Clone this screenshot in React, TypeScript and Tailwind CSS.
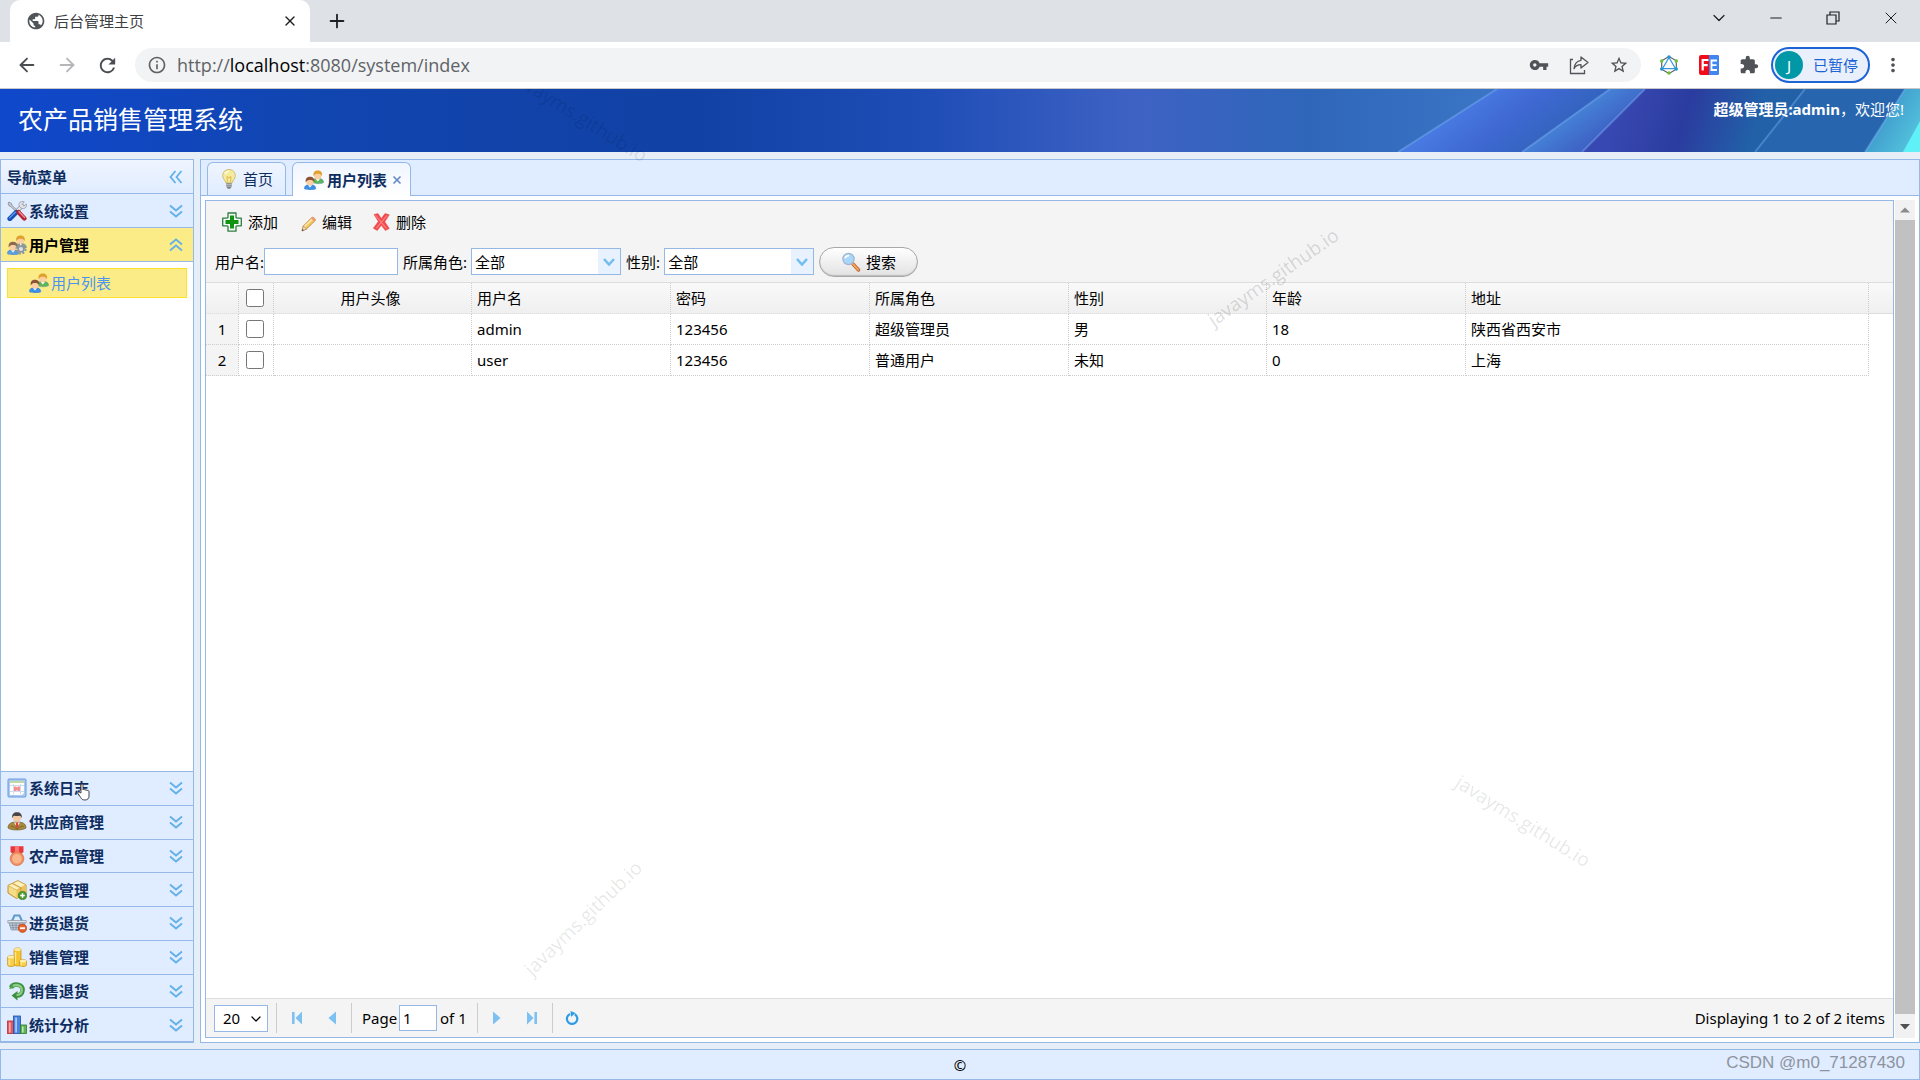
import { useState } from "react";
import type { ReactNode } from "react";
import {
  ArrowLeft,
  ArrowRight,
  ChevronDown,
  Minus,
  Plus,
  X,
} from "lucide-react";
import {
  MdExtension,
  MdMoreVert,
  MdOutlineInfo,
  MdPublic,
  MdRefresh,
  MdStarBorder,
  MdVpnKey,
} from "react-icons/md";

// --- Icons ---
const Icon = ({ children }: { children: ReactNode }) => (
  <svg viewBox="0 0 20 20" className="w-5 h-5 shrink-0" aria-hidden="true">
    {children}
  </svg>
);

const Person = ({ hair, body }: { hair: string; body: string }) => (
  <>
    <path
      d="M0.3 12.500C0.3 9.500 2.500 8.300 6 8.300s5.900 1.200 5.900 4.200c-1.800 1.600-9.800 1.600-11.600 0z"
      fill={body}
      stroke="#3d6fb0"
      strokeOpacity="0.5"
      strokeWidth="0.6"
    />
    <path d="M4 9l2 2.400L8 9z" fill="#fff" />
    <circle cx="6" cy="5.600" r="3.800" fill="#fbcfa4" />
    <path
      d="M1.800 6.200C1 2.200 3.200.5 6 .5s5 1.700 4.200 5.700C9.300 4.300 7.700 3.800 6 3.800s-3.300.5-4.200 2.400z"
      fill={hair}
    />
  </>
);

const UsersIcon = () => (
  <Icon>
    <g transform="translate(7.800 0)">
      <Person hair="#e0a02c" body="#5cb75a" />
    </g>
    <g transform="translate(0 6.200)">
      <Person hair="#8c5535" body="#3b8fe8" />
    </g>
  </Icon>
);

const UsersGearIcon = () => (
  <Icon>
    <g transform="translate(7.500 0)">
      <Person hair="#e0a02c" body="#8fae74" />
    </g>
    <g transform="translate(0 6.200)">
      <Person hair="#8c6a4f" body="#5c9fe0" />
    </g>
    <circle
      cx="14"
      cy="14"
      r="4.600"
      fill="none"
      stroke="#8d959e"
      strokeWidth="2"
      strokeDasharray="2 1.600"
    />
    <circle cx="14" cy="14" r="2.900" fill="#dde1e5" stroke="#8d959e" strokeWidth="1.600" />
  </Icon>
);

const ToolsIcon = () => (
  <Icon>
    <path d="M1 2l1-1 2.500 1.500.5 1.800 6.500 6.500-1.200 1.200L3.800 5.500 2.200 5z" fill="#c9ccd2" stroke="#777d88" strokeWidth="0.700" />
    <path d="M10.500 9.500l6-6" stroke="#8c929c" strokeWidth="4" />
    <path d="M10.500 9.500l5.500-5.500" stroke="#dfe2e7" strokeWidth="2.600" />
    <path d="M12 2.300c1.400-1.900 3.800-2.200 5.300-1.400l-2.200 2.300 1.800 1.800 2.400-2c.6 2-.3 4.200-2.600 4.600-2.600.4-5.400-2.600-4.700-5.300z" fill="#dfe2e7" stroke="#8c929c" strokeWidth="0.700" />
    <path d="M2.800 17.700l6.500-6.500" stroke="#174fb4" strokeWidth="4.800" strokeLinecap="round" />
    <path d="M2.600 16.900l5.700-5.700" stroke="#5f9bf0" strokeWidth="1.300" strokeLinecap="round" />
    <path d="M11.600 11.200l5.800 6.200" stroke="#b32330" strokeWidth="4.400" strokeLinecap="round" />
    <path d="M12 10.800l5.700 5.800" stroke="#f49aa0" strokeWidth="1.300" strokeLinecap="round" />
  </Icon>
);

const CalendarIcon = () => (
  <Icon>
    <rect x="1" y="1" width="18" height="18" rx="1" fill="#a9c8f2" stroke="#6a9ad8" />
    <path d="M3 3h14v12l-2 2H3z" fill="#fff" />
    <path d="M3 4h14" stroke="#a9cf86" strokeWidth="1.500" />
    <path d="M3 7.500h14M3 13.500h14M6.500 6v10.500M13.500 6v10.500" stroke="#cfdcee" />
    <path d="M7 8.500h2l1 1 1-1h2V13h-2l-1-1-1 1H7z" fill="#f58f92" />
  </Icon>
);

const SupplierIcon = () => (
  <Icon>
    <path d="M1 16c0-4.500 3.500-6 9-6s9 1.500 9 6c-3 2.600-15 2.600-18 0z" fill="#a98a3e" stroke="#6d5722" strokeWidth="0.700" />
    <path d="M7 10.500l3 4.500 3-4.500z" fill="#fff" />
    <path d="M8.500 10.500h3L11 12l.5 2.500-1.500 1.700L8.500 14.500 9 12z" fill="#d8473b" />
    <path d="M3.500 14.500c1.500-1 4 .5 6.500 2.500 2.500-2 5-3.500 6.500-2.500" stroke="#7e6427" fill="none" />
    <circle cx="10" cy="5.800" r="4" fill="#f2c9a2" />
    <path d="M5.300 6.500C4.500 2 7 .3 10 .3s5.500 1.700 4.700 6.200c-.4-2-1.200-2.800-2-2.800-1.800.4-3.600.4-5.400 0-.8 0-1.600.8-2 2.800z" fill="#4a4446" />
  </Icon>
);

const MedalIcon = () => (
  <Icon>
    <path d="M3.500.3h13V6l-3 2.500h-7L3.500 6z" fill="#e8383c" />
    <path d="M8 .3h4V8H8z" fill="#f8787a" />
    <circle cx="10" cy="12.700" r="6.900" fill="#f08e5e" stroke="#d8683c" strokeWidth="0.600" />
    <circle cx="10" cy="12.700" r="5.200" fill="#f9b48a" stroke="#e88659" strokeWidth="0.600" />
  </Icon>
);

const BoxAddIcon = () => (
  <Icon>
    <path d="M1 5.500L11 .7l8 4.300v8.500L9.500 18.500 1 13z" fill="#f6dc86" stroke="#c0912c" />
    <path d="M1 5.500l8.500 4.500L19 5 11 .7z" fill="#fdf0bb" stroke="#c99c3a" strokeWidth="0.600" />
    <path d="M9.500 10v8.500L19 13.500V5z" fill="#ebc25c" />
    <path d="M5.300 3.500l8.500 4.300v2.700" stroke="#cc9f3d" strokeWidth="1.200" fill="none" />
    <circle cx="15.500" cy="15.500" r="4.100" fill="#4c9a32" stroke="#2c6e1a" strokeWidth="0.600" />
    <path d="M15.500 13.200v4.600M13.200 15.500h4.600" stroke="#fff" strokeWidth="1.600" />
  </Icon>
);

const BasketIcon = () => (
  <Icon>
    <path d="M5 8l2.500-5.500h5L15 8" stroke="#5f9ac8" strokeWidth="2" fill="none" />
    <path d="M.8 7.500h18.400v2.300H.8z" fill="#e1e6ec" stroke="#8693a3" strokeWidth="0.700" />
    <path d="M2 10h16l-2 7H4.300z" fill="#c4ced9" stroke="#8391a2" strokeWidth="0.700" />
    <path d="M5.500 10l.8 7M9 10v7M12.500 10l-.4 7M2.500 12.300h15M3.300 14.700h13.500" stroke="#7f8da0" strokeWidth="0.800" />
    <circle cx="15.500" cy="15.200" r="4.200" fill="#e8622c" stroke="#b03d10" strokeWidth="0.600" />
    <path d="M13 15.200h5" stroke="#fff" strokeWidth="1.800" />
  </Icon>
);

const CoinsIcon = () => (
  <Icon>
    <path d="M7 2.800C7 .3 14 .3 14 2.800V17.500c0 2-7 2-7 0z" fill="#f6c52f" stroke="#c98e12" strokeWidth="0.700" />
    <ellipse cx="10.500" cy="2.600" rx="3.300" ry="1.500" fill="#fdec9a" />
    <path d="M.6 10.200c0-2 6.800-2 6.800 0V18c0 2-6.800 2-6.800 0z" fill="#f8cf48" stroke="#c98e12" strokeWidth="0.700" />
    <ellipse cx="4" cy="10.200" rx="3.100" ry="1.400" fill="#fdf0ac" />
    <path d="M12.500 14.200c0-2 7-2 7 0V18c0 2-7 2-7 0z" fill="#f8cf48" stroke="#c98e12" strokeWidth="0.700" />
    <ellipse cx="16" cy="14.200" rx="3.200" ry="1.400" fill="#fdf0ac" />
    <path d="M8.500 5v12M2.300 12.500V18M14.300 16v2.500" stroke="#fdeb9a" strokeWidth="1.300" />
  </Icon>
);

const ReturnIcon = () => (
  <Icon>
    <path d="M4 6.500C6.500 2 16 2.500 15.500 9.500c-.3 4-3.500 5-5.500 5" stroke="#3c8f3e" strokeWidth="4.600" fill="none" />
    <path d="M10.500 10v9.500L4.500 14.500z" fill="#3c8f3e" />
    <path d="M4.500 6.200C7 3 15 3 14.800 9.500c-.3 3.200-2.800 4.500-5.300 4.500" stroke="#8bcb86" strokeWidth="2.400" fill="none" />
    <path d="M2 8l5.500-1-3-4z" fill="#4f9f4f" />
  </Icon>
);

const ChartIcon = () => (
  <Icon>
    <rect x="0.500" y="6" width="6" height="12.500" fill="#e8565a" stroke="#b52d33" strokeWidth="0.800" />
    <rect x="2" y="7.500" width="1.600" height="10" fill="#f9b3b3" />
    <rect x="6.500" y="1" width="7" height="17.500" fill="#4b83e0" stroke="#2450a8" strokeWidth="0.800" />
    <rect x="8.200" y="2.500" width="1.800" height="15" fill="#a4c6fa" />
    <rect x="13.500" y="10" width="6" height="8.500" fill="#5fb458" stroke="#2c7c2c" strokeWidth="0.800" />
    <rect x="15" y="11.500" width="1.600" height="6" fill="#bce5b3" />
  </Icon>
);

const BulbIcon = () => (
  <Icon>
    <path d="M10 .5c-3.900 0-6.300 2.800-6.300 6.100 0 3.300 2.800 4.700 3.200 7.400h6.200c.4-2.700 3.200-4.100 3.200-7.400C16.300 3.300 13.900.5 10 .5z" fill="#f6eb9c" stroke="#c4b057" strokeWidth="0.800" />
    <path d="M8.500 13.500L8 7.500l2 1.500 2-1.500-.5 6" stroke="#d8a431" strokeWidth="0.700" fill="none" />
    <path d="M6.300 5c.6-1.800 1.800-2.700 3.500-2.800" stroke="#fffbe0" strokeWidth="1.500" fill="none" />
    <path d="M7.300 14.300h5.400v3.200L11.300 19.800H8.700l-1.400-2.300z" fill="#7d8085" />
    <path d="M7.300 15.600h5.400M7.300 17.200h5.400" stroke="#d5d7da" strokeWidth="0.700" />
  </Icon>
);

const AddIcon = () => (
  <Icon>
    <path d="M6 1h8v4.500L15 6.200h4.300v7.600H15l-1 .7V19.200H6v-4.700l-1-.7H.7V6.200H5L6 5.500z" fill="#f2f8f2" stroke="#2f7d44" strokeWidth="1.300" strokeLinejoin="round" />
    <path d="M8 3.500h4V8h4.500v4H12v4.500H8V12H3.500V8H8z" fill="#129412" />
  </Icon>
);

const PencilIcon = () => (
  <Icon>
    <path d="M6 19l1.300-5L16 5.300c1-.8 4 1.900 3.200 3.200L10.500 17z" fill="#f6c661" stroke="#b77e2d" strokeWidth="0.800" />
    <path d="M8.500 14.500L17 6.300" stroke="#fdebb5" strokeWidth="1.500" />
    <path d="M6 19l1.300-5 3.200 3z" fill="#f3dcc0" stroke="#a8814f" strokeWidth="0.600" />
    <path d="M6 19l.5-2 1.300 1.300z" fill="#444" />
    <path d="M15 6.300l1.300-1.200c1-.6 3.600 1.900 3 3l-1.200 1.400z" fill="#ee9a79" />
  </Icon>
);

const DeleteIcon = () => (
  <Icon>
    <path d="M4 2.500l4-1 3.300 5L15 1.500l4.300 1.300-4.500 7 4.500 6.700-4 2-4-5.200-4 5.200-4-2.200L8.300 9.500z" fill="#f4494c" stroke="#e04a4c" strokeWidth="0.500" />
    <path d="M5.500 3.300L16.500 16.500M17 3.500L6.500 16" stroke="#fb7c7e" strokeWidth="1.200" />
  </Icon>
);

const SearchIcon = () => (
  <Icon>
    <path d="M12 12l5.500 6" stroke="#b8622a" strokeWidth="3.400" strokeLinecap="round" />
    <path d="M12 12l5.300 5.800" stroke="#f2a35d" strokeWidth="2" strokeLinecap="round" />
    <circle cx="7.500" cy="7" r="5.600" fill="#a9d6f9" stroke="#a3b6d0" strokeWidth="1.300" />
    <path d="M4 6.300c.6-2 2.400-2.800 4.200-2.500" stroke="#fff" strokeWidth="1.600" fill="none" />
  </Icon>
);

// Double arrow used by the accordion headers
const DoubleChevron = ({ className = "" }: { className?: string }) => (
  <svg
    viewBox="0 0 14 14"
    className={`w-3.5 h-3.5 shrink-0 ${className}`}
    fill="none"
    stroke="#62b0ea"
    strokeWidth="1.800"
    aria-hidden="true"
  >
    <path d="M1 1.500l6 5 6-5M1 7.500l6 5 6-5" />
  </svg>
);

// --- Data ---
const bottomMenus = [
  { title: "系统日志", icon: <CalendarIcon /> },
  { title: "供应商管理", icon: <SupplierIcon /> },
  { title: "农产品管理", icon: <MedalIcon /> },
  { title: "进货管理", icon: <BoxAddIcon /> },
  { title: "进货退货", icon: <BasketIcon /> },
  { title: "销售管理", icon: <CoinsIcon /> },
  { title: "销售退货", icon: <ReturnIcon /> },
  { title: "统计分析", icon: <ChartIcon /> },
];

const users = [
  { name: "admin", password: "123456", role: "超级管理员", sex: "男", age: 18, address: "陕西省西安市" },
  { name: "user", password: "123456", role: "普通用户", sex: "未知", age: 0, address: "上海" },
];

// --- Browser chrome ---
const BrowserBar = () => (
  <div className="relative z-10 shrink-0">
    <div className="flex h-[42px] bg-[#dee1e6] pl-2.5 text-[#202124]">
      <div className="flex w-[300px] items-center rounded-t-[10px] bg-white pl-4 pr-3">
        <MdPublic className="h-5 w-5 text-[#505357]" />
        <span className="ml-2 flex-1 text-[#3c4043]">后台管理主页</span>
        <button type="button" aria-label="关闭标签页">
          <X className="h-4 w-4" />
        </button>
      </div>
      <button type="button" aria-label="新标签页" className="ml-4">
        <Plus className="h-[22px] w-[22px]" />
      </button>
      <div className="ml-auto flex h-9 items-center">
        <button type="button" aria-label="标签搜索" className="flex w-[58px] justify-center">
          <ChevronDown className="h-5 w-5" strokeWidth={1.5} />
        </button>
        <button type="button" aria-label="最小化" className="flex w-[56px] justify-center">
          <Minus className="h-[18px] w-[18px]" strokeWidth={1.5} />
        </button>
        <button type="button" aria-label="还原" className="flex w-[58px] justify-center">
          <svg viewBox="0 0 14 14" className="h-3.5 w-3.5" fill="none" stroke="currentColor" strokeWidth="1.200">
            <path d="M1 4h9v9H1zM4 4V1h9v9h-3" />
          </svg>
        </button>
        <button type="button" aria-label="关闭" className="flex w-[58px] justify-center">
          <X className="h-5 w-5" strokeWidth={1.2} />
        </button>
      </div>
    </div>
    <div className="flex h-[47px] items-center border-b border-[#c8c8c8] bg-white pl-4 pr-4 pb-1 pt-1">
      <div className="flex w-[119px] items-center gap-[18px] text-[#4a4d51]">
        <ArrowLeft className="h-[22px] w-[22px]" />
        <ArrowRight className="h-[22px] w-[22px] text-[#b4b6b9]" />
        <MdRefresh className="h-[23px] w-[23px]" />
      </div>
      <div className="flex h-[34px] flex-1 items-center rounded-full bg-[#f1f3f4] pl-3 pr-3 text-[#5f6368]">
        <MdOutlineInfo className="h-5 w-5" />
        <span className="ml-2.5 flex-1 font-['Open_Sans'] text-[18px] leading-6">
          http://<span className="text-black">localhost</span>:8080/system/index
        </span>
        <div className="flex items-center gap-5 text-[#505357]">
          <MdVpnKey className="h-5 w-5" />
          <svg viewBox="0 0 20 20" className="h-5 w-5" fill="none" stroke="currentColor" strokeWidth="1.300">
            <path d="M4 4.500H1.500v14h14V15" />
            <path d="M12 2l7 5.500-7 5.500V9.700c-3 0-5.500 1.300-7 4C5.500 9 8 5.800 12 5.300z" strokeLinejoin="round" />
          </svg>
          <MdStarBorder className="h-5 w-5" />
        </div>
      </div>
      <div className="ml-[18px] flex items-center gap-5 text-[#505357]">
        <svg viewBox="0 0 20 20" className="h-5 w-5" fill="none">
          <path d="M10 1.500l7.300 4.300v8.400L10 18.500l-7.300-4.300V5.800z" stroke="#5f6368" strokeWidth="1.200" />
          <path d="M10 2.500l6.500 11.200h-13z" stroke="#3a98dd" strokeWidth="1.200" />
          <g fill="#2196d8">
            <circle cx="10" cy="2" r="1.700" />
            <circle cx="2.700" cy="14" r="1.700" />
            <circle cx="17.300" cy="14" r="1.700" />
          </g>
          <g fill="#6cbf3a">
            <circle cx="2.700" cy="6" r="1.700" />
            <circle cx="17.300" cy="6" r="1.700" />
            <circle cx="10" cy="18" r="1.700" />
          </g>
        </svg>
        <svg viewBox="0 0 20 20" className="h-5 w-5" fill="none">
          <rect width="20" height="20" rx="2" fill="#f00c18" />
          <path d="M10 0h8a2 2 0 0 1 2 2v16a2 2 0 0 1-2 2h-8z" fill="#3f86f0" />
          <path d="M9.500 5H3.700v10.500M3.700 10.200h5" stroke="#fff" strokeWidth="2.200" />
          <path d="M18 5.500h-5.500V15H18M12.500 10.200h5" stroke="#fff" strokeWidth="1.800" />
        </svg>
        <MdExtension className="h-5 w-5" />
      </div>
      <button
        type="button"
        className="ml-3 flex h-9 w-[99px] items-center justify-between rounded-full border-2 border-[#1c63d5] bg-[#eaf0fb] pl-0.5 pr-2.5 text-[#1c63d5]"
      >
        <span className="flex h-[28px] w-[28px] items-center justify-center rounded-full bg-[#0097a7] text-white">
          J
        </span>
        已暂停
      </button>
      <MdMoreVert className="ml-3 h-[22px] w-[22px] text-[#505357]" />
    </div>
  </div>
);

// --- Banner ---
const Banner = () => (
  <header className="relative flex h-[63px] shrink-0 items-center justify-between overflow-hidden bg-[linear-gradient(90deg,#1048cc_0%,#1145b0_16%,#1141a4_36%,#1e4db6_48%,#3e62c4_59%,#2f66ba_68%,#3a74c4_77%)] px-4 pb-1 text-white">
    <svg
      viewBox="0 0 540 63"
      className="absolute right-0 top-0 h-[63px] w-[540px]"
      aria-hidden="true"
    >
      <defs>
        <linearGradient id="beam" gradientUnits="userSpaceOnUse" x1="60" y1="20" x2="120" y2="95">
          <stop offset="0" stopColor="#4a80e6" />
          <stop offset="0.500" stopColor="#4069d4" />
          <stop offset="1" stopColor="#3163bc" />
        </linearGradient>
        <linearGradient id="glow" gradientUnits="userSpaceOnUse" x1="180" y1="30" x2="215" y2="80">
          <stop offset="0" stopColor="#4684d8" />
          <stop offset="0.500" stopColor="#3f68c8" />
          <stop offset="1" stopColor="#3c52b8" />
        </linearGradient>
        <linearGradient id="violet" gradientUnits="userSpaceOnUse" x1="240" y1="10" x2="370" y2="50">
          <stop offset="0" stopColor="#3848b2" />
          <stop offset="0.500" stopColor="#2b3c9f" />
          <stop offset="1" stopColor="#2260a8" />
        </linearGradient>
        <linearGradient id="edge" gradientUnits="userSpaceOnUse" x1="490" y1="20" x2="540" y2="50">
          <stop offset="0" stopColor="#3a90c8" />
          <stop offset="1" stopColor="#55c6de" />
        </linearGradient>
      </defs>
      <path d="M117 0H230L142 63H18z" fill="url(#beam)" />
      <path d="M230 0h35L202 63h-60z" fill="url(#glow)" />
      <path d="M265 0H540V63H202z" fill="url(#violet)" />
      <path d="M425 0H540V63H375z" fill="#2766ae" />
      <path d="M525 0H540V63H485z" fill="url(#edge)" />
      <path d="M540 32V63H523z" fill="#5ff0f8" />
      <g stroke="#8fc0ff" strokeOpacity="0.350" strokeWidth="2">
        <path d="M117 0L18 63M230 0L142 63M265 0L202 63M425 0L375 63M525 0L485 63" />
      </g>
    </svg>
    <h1 className="relative pl-0.5 text-[25px] leading-8">农产品销售管理系统</h1>
    <p className="relative mb-5 leading-5">
      <b>超级管理员:admin</b>，欢迎您!
    </p>
  </header>
);

// --- Sidebar ---
interface MenuHeaderProps {
  title: string;
  icon: ReactNode;
  active?: boolean;
}

const MenuHeader = ({ title, icon, active = false }: MenuHeaderProps) => (
  <button
    type="button"
    className={`flex min-h-0 w-full items-center border-b border-[#95b8e7] pl-1.5 pr-2.5 text-left font-bold ${
      active ? "bg-[#fbec88] text-black" : "bg-[#e0ecff] text-[#0e2d5f]"
    }`}
  >
    {icon}
    <span className="ml-0.5 flex-1">{title}</span>
    <DoubleChevron className={active ? "rotate-180" : ""} />
  </button>
);

const Sidebar = () => (
  <nav className="flex w-[194px] shrink-0 flex-col border border-[#95b8e7] bg-white">
    <div className="flex h-[34px] items-center border-b border-[#95b8e7] bg-linear-to-b from-[#eff5ff] to-[#e0ecff] pl-1.5 pr-2.5 font-bold text-[#0e2d5f]">
      <span className="flex-1">导航菜单</span>
      <button type="button" aria-label="收起">
        <DoubleChevron className="rotate-90" />
      </button>
    </div>
    <div className="grid h-[68px] shrink-0 auto-rows-fr">
      <MenuHeader title="系统设置" icon={<ToolsIcon />} />
      <MenuHeader title="用户管理" icon={<UsersGearIcon />} active />
    </div>
    <div className="flex-1 p-1.5">
      <a
        href="#users"
        className="flex h-[30px] items-center border border-[#fce12f] bg-[#fbec88] pl-[21px] text-[#4a94f0]"
      >
        <UsersIcon />
        <span className="ml-0.5">用户列表</span>
      </a>
    </div>
    <div className="relative grid h-[271px] shrink-0 auto-rows-fr border-t border-[#95b8e7]">
      {bottomMenus.map((menu) => (
        <MenuHeader key={menu.title} title={menu.title} icon={menu.icon} />
      ))}
      {/* Mouse pointer */}
      <svg viewBox="0 0 14 18" className="absolute left-[76px] top-[11px] h-[18px] w-[14px]" aria-hidden="true">
        <path
          d="M4 10V2c0-1.500 2-1.500 2 0v5c.3-1 2-.8 2 .3.400-.8 2-.6 2 .5.500-.7 2-.4 2 .7V13c0 2.500-1.500 4-4 4s-3.500-1-4.300-2.500L1 10.500c-.6-1.200.8-2 1.600-1.200z"
          fill="#fff"
          stroke="#333"
          strokeWidth="0.900"
        />
      </svg>
    </div>
  </nav>
);

// --- Toolbar ---
interface ComboProps {
  id: string;
  label: string;
  options: string[];
}

const Combo = ({ id, label, options }: ComboProps) => (
  <div className="flex items-center">
    <label htmlFor={id}>{label}:</label>
    <div className="relative ml-1">
      <select
        id={id}
        className="h-[27px] w-[150px] appearance-none border border-[#95b8e7] bg-white pl-[3px]"
      >
        {options.map((o) => (
          <option key={o}>{o}</option>
        ))}
      </select>
      <span className="pointer-events-none absolute right-px top-px flex h-[25px] w-[22px] items-center justify-center bg-[#e8f2ff]">
        <svg viewBox="0 0 12 8" className="h-2 w-3" fill="none" stroke="#74bdf0" strokeWidth="2.600">
          <path d="M1 1l5 5.500L11 1" />
        </svg>
      </span>
    </div>
  </div>
);

const ToolButton = ({ icon, text }: { icon: ReactNode; text: string }) => (
  <button type="button" className="flex items-center gap-1.5">
    {icon}
    {text}
  </button>
);

const Toolbar = () => (
  <div className="shrink-0 border-b border-[#dddddd] bg-[#f4f4f4]">
    <div className="flex h-[42px] items-center gap-[18px] pl-4">
      <ToolButton icon={<AddIcon />} text="添加" />
      <ToolButton icon={<PencilIcon />} text="编辑" />
      <ToolButton icon={<DeleteIcon />} text="删除" />
    </div>
    <div className="flex h-[39px] items-center gap-[5px] pb-0.5 pl-[9px]">
      <div className="flex items-center">
        <label htmlFor="username">用户名:</label>
        <input
          id="username"
          type="text"
          className="h-[27px] w-[134px] border border-[#95b8e7] bg-white px-1"
        />
      </div>
      <Combo id="role" label="所属角色" options={["全部", "超级管理员", "普通用户"]} />
      <Combo id="sex" label="性别" options={["全部", "男", "女", "未知"]} />
      <button
        type="button"
        className="flex h-[30px] w-[99px] items-center justify-center gap-[5px] rounded-full border border-[#a8a8a8] bg-linear-to-b from-white to-[#e2e2e2] shadow-[inset_0_-1px_1px_#bbb]"
      >
        <SearchIcon />
        搜索
      </button>
    </div>
  </div>
);

// --- Grid ---
const headCell = "border-r border-dotted border-r-[#cccccc] px-[5px] font-normal";
const cell = "border-r border-b border-dotted border-[#cccccc] px-[5px]";

const UserGrid = () => {
  const [checked, setChecked] = useState<string[]>([]);

  const toggle = (name: string) =>
    setChecked((prev) =>
      prev.includes(name) ? prev.filter((n) => n !== name) : [...prev, name]
    );

  return (
    <table className="w-full table-fixed border-separate border-spacing-0 text-left">
      <thead>
        <tr className="h-[31px] bg-linear-to-b from-[#f9f9f9] to-[#efefef] *:border-b *:border-b-[#dddddd]">
          <th className={`${headCell} w-[33px]`} />
          <th className="w-[35px] border-r border-dotted border-r-[#cccccc] pl-[7px] font-normal">
            <input
              type="checkbox"
              aria-label="全选"
              className="block h-[18px] w-[18px]"
              checked={checked.length === users.length}
              onChange={(e) =>
                setChecked(e.target.checked ? users.map((u) => u.name) : [])
              }
            />
          </th>
          <th className="w-[198px] border-r border-dotted border-r-[#cccccc] pr-1 text-center font-normal">
            用户头像
          </th>
          <th className={`${headCell} w-[199px]`}>用户名</th>
          <th className={`${headCell} w-[199px]`}>密码</th>
          <th className={`${headCell} w-[199px]`}>所属角色</th>
          <th className={`${headCell} w-[198px]`}>性别</th>
          <th className={`${headCell} w-[199px]`}>年龄</th>
          <th className={headCell}>地址</th>
          <th className="w-6" />
        </tr>
      </thead>
      <tbody>
        {users.map((u, i) => (
          <tr key={u.name} className="h-[31px]">
            <td className={`${cell} bg-[#f4f4f4] text-center`}>{i + 1}</td>
            <td className="border-r border-b border-dotted border-[#cccccc] pl-[7px]">
              <input
                type="checkbox"
                aria-label={u.name}
                className="block h-[18px] w-[18px]"
                checked={checked.includes(u.name)}
                onChange={() => toggle(u.name)}
              />
            </td>
            <td className={cell} />
            <td className={cell}>{u.name}</td>
            <td className={cell}>{u.password}</td>
            <td className={cell}>{u.role}</td>
            <td className={cell}>{u.sex}</td>
            <td className={cell}>{u.age}</td>
            <td className={cell}>{u.address}</td>
            <td />
          </tr>
        ))}
      </tbody>
    </table>
  );
};

// --- Pager ---
const Separator = () => <span className="h-[30px] w-px bg-[#cccccc]" />;

const PageButton = ({ label, path }: { label: string; path: string }) => (
  <button type="button" aria-label={label} className="flex w-[35px] justify-center">
    <svg viewBox="0 0 12 14" className="h-3.5 w-3" fill="#7cc1f2">
      <path d={path} />
    </svg>
  </button>
);

const Pager = () => (
  <div className="flex h-[39px] shrink-0 items-center border-t border-[#dddddd] bg-[#f4f4f4] pl-2 pr-2">
    <div className="relative mr-2">
      <select
        aria-label="每页条数"
        className="h-[27px] w-[54px] appearance-none border border-[#95b8e7] bg-white pl-2"
      >
        <option>20</option>
        <option>50</option>
        <option>100</option>
      </select>
      <ChevronDown className="pointer-events-none absolute right-1 top-1.5 h-4 w-4" strokeWidth={1.8} />
    </div>
    <Separator />
    <div className="flex w-[74px] justify-center">
      <PageButton label="首页" path="M1 1h2.600v12H1zM11 .5v13L4.500 7z" />
      <PageButton label="上一页" path="M10 .5v13L2.500 7z" />
    </div>
    <Separator />
    <label htmlFor="page" className="ml-2.5 w-[37px]">
      Page
    </label>
    <input
      id="page"
      type="text"
      defaultValue="1"
      className="h-[26px] w-[38px] border border-[#95b8e7] bg-white px-[3px]"
    />
    <span className="ml-[3px] mr-2.5">of 1</span>
    <Separator />
    <div className="flex w-[74px] justify-center">
      <PageButton label="下一页" path="M2 .5v13L9.500 7z" />
      <PageButton label="末页" path="M8.400 1H11v12H8.400zM1 .5v13L7.500 7z" />
    </div>
    <Separator />
    <button type="button" aria-label="刷新" className="ml-3">
      <svg viewBox="0 0 14 14" className="h-3.5 w-3.5" fill="none">
        <path d="M9.800 3.300a5.200 5.200 0 1 1-4.800-.3" stroke="#2d9be6" strokeWidth="2.200" />
        <path d="M5.500 0l5 2-4.500 4z" fill="#2d9be6" />
      </svg>
    </button>
    <span className="ml-auto">Displaying 1 to 2 of 2 items</span>
  </div>
);

const ScrollBar = () => (
  <div className="ml-px flex w-5 shrink-0 flex-col bg-[#f1f1f1]" aria-hidden="true">
    <svg viewBox="0 0 20 20" className="h-5 w-full" fill="#8b8b8b">
      <path d="M5 12.500h10L10 7.500z" />
    </svg>
    <div className="flex-1 bg-[#c1c1c1]" />
    <svg viewBox="0 0 20 24" className="h-6 w-full" fill="#505050">
      <path d="M5 10h10l-5 5.500z" />
    </svg>
  </div>
);

// --- Main panel ---
const Workspace = () => (
  <main className="flex min-w-0 flex-1 flex-col border border-[#95b8e7] bg-white">
    <div className="flex h-9 shrink-0 items-end gap-1.5 border-b border-[#95b8e7] bg-[#e0ecff] pl-1.5 text-[#0e2d5f]">
      <button
        type="button"
        className="flex h-[33px] w-[79px] items-center justify-center gap-1 rounded-t-[6px] border border-b-0 border-[#95b8e7] bg-linear-to-b from-[#eff5ff] to-[#e0ecff] pr-px"
      >
        <BulbIcon />
        首页
      </button>
      <div className="-mb-px flex h-[34px] w-[119px] items-center rounded-t-[6px] border border-b-0 border-[#95b8e7] bg-linear-to-b from-[#eff5ff] to-white pl-[11px] font-bold">
        <UsersIcon />
        <span className="ml-[3px]">用户列表</span>
        <button type="button" aria-label="关闭用户列表" className="ml-1">
          <X className="h-3 w-3 text-[#6b8cc0]" strokeWidth={3.5} />
        </button>
      </div>
    </div>
    <div className="flex min-h-0 flex-1 p-1">
      <section className="flex min-w-0 flex-1 flex-col border border-[#95b8e7]">
        <Toolbar />
        <div className="min-h-0 flex-1">
          <UserGrid />
        </div>
        <Pager />
      </section>
      <ScrollBar />
    </div>
  </main>
);

const markText =
  "pointer-events-none absolute -translate-x-1/2 -translate-y-1/2 whitespace-nowrap font-['Open_Sans'] text-[19px] leading-6";

// Watermarks float freely above the page
const Watermarks = () => (
  <>
    <span className={`${markText} left-[580px] top-[116px] rotate-[32deg] text-black/10`}>
      javayms.github.io
    </span>
    <span className={`${markText} left-[1273px] top-[277px] rotate-[-35deg] text-black/15`}>
      javayms.github.io
    </span>
    <span className={`${markText} left-[1523px] top-[821px] rotate-[32deg] text-black/10`}>
      javayms.github.io
    </span>
    <span className={`${markText} left-[583px] top-[918px] rotate-[-44deg] text-black/10`}>
      javayms.github.io
    </span>
  </>
);

const App = () => (
  <div className="relative flex h-screen flex-col overflow-hidden bg-[#e6eef8] font-['Noto_Sans','Noto_Sans_CJK_SC',sans-serif] text-[15px] leading-5 text-black">
    <BrowserBar />
    <Banner />
    <div className="my-1.5 flex min-h-0 flex-1 gap-1.5 pt-px">
      <Sidebar />
      <Workspace />
    </div>
    <footer className="relative flex h-[31px] shrink-0 items-center justify-center border border-[#95b8e7] bg-[#e0ecff]">
      ©
      <span className="absolute right-3.5 top-px font-['Liberation_Sans'] text-[17px] leading-6 text-[#8d949e]">
        CSDN @m0_71287430
      </span>
    </footer>
    <Watermarks />
  </div>
);

export default App;
